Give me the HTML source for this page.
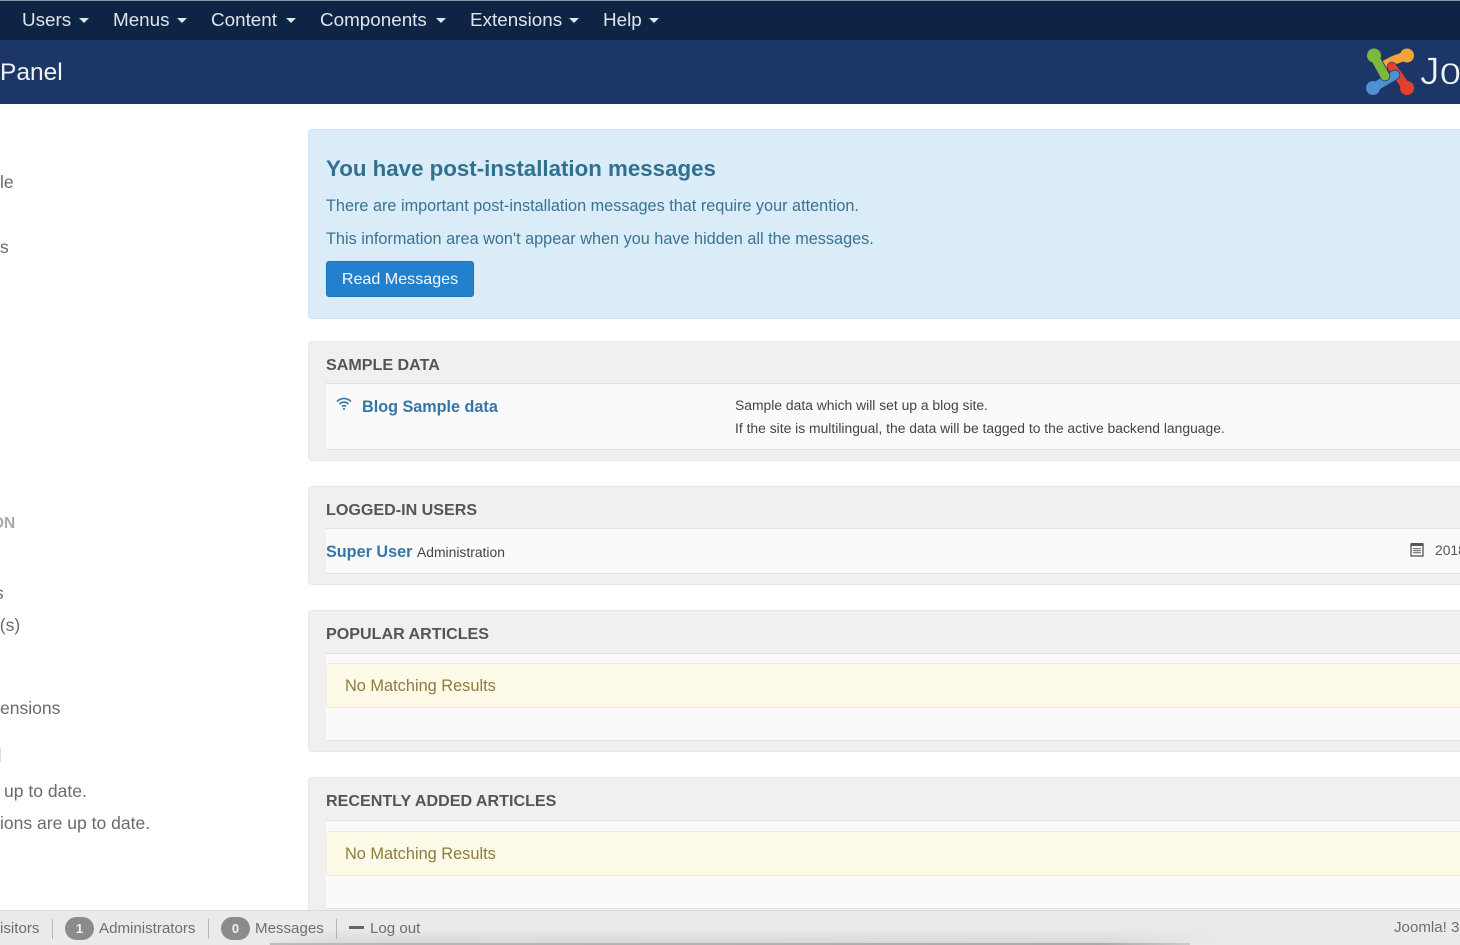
<!DOCTYPE html>
<html><head><meta charset="utf-8"><style>
html,body{margin:0;padding:0;width:1460px;height:945px;overflow:hidden;background:#fff;font-family:"Liberation Sans",sans-serif}
#w{position:absolute;left:0;top:0;width:1460px;height:945px;overflow:hidden;filter:blur(.35px)}
.a{position:absolute;white-space:nowrap}
.nav{color:#dfe5ec;font-size:18.85px;line-height:24px;top:8px}
.car{position:absolute;top:18px;width:0;height:0;border-left:5px solid transparent;border-right:5px solid transparent;border-top:5px solid #dfe5ec}
.side{color:#6a6a6a;font-size:17.55px;line-height:20px}
.well{position:absolute;left:308px;width:1160px;background:#f0f0f0;border:1px solid #e8e8e8;border-radius:4px;box-sizing:border-box}
.row{position:absolute;left:326px;width:1140px;background:#fafafa;border-top:1px solid #e2e2e2;border-bottom:1px solid #e2e2e2;box-sizing:border-box}
.h{color:#555;font-weight:bold;font-size:16.1px;line-height:20px;left:326px}
.warn{position:absolute;left:326px;width:1140px;height:45px;background:#fdfae8;border:1px solid #f3ecd4;border-radius:4px;box-sizing:border-box}
.wt{color:#8f7b3f;font-size:16.35px;line-height:20px;left:345px}
.foot{color:#6f6f6f;font-size:15.1px;line-height:20px;top:919px}
.sep{position:absolute;top:919px;width:1px;height:20px;background:#b5b5b5}
.badge{position:absolute;top:917px;height:23px;border-radius:12px;background:#8b8b8b;color:#f2f2f2;font-size:13px;font-weight:bold;line-height:23px;text-align:center}
</style></head><body><div id="w">
<div class="a" style="left:0;top:0;width:1460px;height:40px;background:#0e2444;border-top:1px solid #8a96a8;box-sizing:border-box"></div>
<div class="a nav" style="left:22px">Users</div><div class="car" style="left:79px"></div>
<div class="a nav" style="left:113px">Menus</div><div class="car" style="left:177px"></div>
<div class="a nav" style="left:211px">Content</div><div class="car" style="left:286px"></div>
<div class="a nav" style="left:320px">Components</div><div class="car" style="left:436px"></div>
<div class="a nav" style="left:470px">Extensions</div><div class="car" style="left:569px"></div>
<div class="a nav" style="left:603px">Help</div><div class="car" style="left:649px"></div>
<div class="a" style="left:0;top:40px;width:1460px;height:64px;background:#1c3767"></div>
<div class="a" style="left:0;top:58px;color:#f0f3f7;font-size:24.5px;line-height:30px">Panel</div>
<svg class="a" style="left:1366px;top:48px" width="48" height="48" viewBox="0 0 48 48" fill="none" stroke-linecap="round">
<path d="M41 8C32 10 24 13 16 19" stroke="#1c3767" stroke-width="10.5"/><path d="M41 8C32 10 24 13 16 19" stroke="#f2a33a" stroke-width="9"/><circle cx="41" cy="7.5" r="7" fill="#f2a33a"/>
<path d="M26 19L41 40" stroke="#1c3767" stroke-width="10.5"/><path d="M26 19L41 40" stroke="#e2402b" stroke-width="9"/><circle cx="41" cy="40" r="7" fill="#e2402b"/>
<path d="M7 40L29 27" stroke="#1c3767" stroke-width="10.5"/><path d="M7 40L29 27" stroke="#4e90d2" stroke-width="9"/><circle cx="7" cy="40" r="7" fill="#4e90d2"/>
<path d="M8 8L19 28" stroke="#1c3767" stroke-width="10.5"/><path d="M8 8L19 28" stroke="#7ab840" stroke-width="9"/><circle cx="8" cy="7.5" r="7" fill="#7ab840"/>
</svg>
<div class="a" style="left:1420px;top:49.5px;color:#f0f3f7;font-size:39px;line-height:44px;-webkit-text-stroke:.7px #1c3767;paint-order:fill stroke">Jo</div>

<div class="a side" style="left:0;top:172px">le</div>
<div class="a side" style="left:0;top:237px">s</div>
<div class="a" style="left:-8px;top:514px;color:#aaa;font-size:15.5px;font-weight:bold;line-height:20px">ON</div>
<div class="a side" style="left:-5px;top:583px">s</div>
<div class="a side" style="left:-10px;top:615px">e(s)</div>
<div class="a side" style="left:0;top:698px">ensions</div>
<div class="a" style="left:0;top:748px;width:1px;height:14px;background:#ddd"></div>
<div class="a side" style="left:4px;top:781px">up to date.</div>
<div class="a side" style="left:0;top:813px">ions are up to date.</div>

<div class="a" style="left:308px;top:129px;width:1160px;height:190px;background:#d9ecf8;border:1px solid #cfe5f2;border-radius:4px;box-sizing:border-box"></div>
<div class="a" style="left:326px;top:154px;color:#31708f;font-size:22.3px;font-weight:bold;line-height:30px">You have post-installation messages</div>
<div class="a" style="left:326px;top:196px;color:#3a7392;font-size:16.25px;line-height:20px">There are important post-installation messages that require your attention.</div>
<div class="a" style="left:326px;top:229px;color:#3a7392;font-size:16.25px;line-height:20px">This information area won't appear when you have hidden all the messages.</div>
<div class="a" style="left:326px;top:261px;width:148px;height:36px;background:#2280cc;border:1px solid #1b73bb;box-sizing:border-box;border-radius:3px;color:#f4f9fd;font-size:16.1px;line-height:34px;text-align:center">Read Messages</div>

<div class="well" style="top:341px;height:120px"></div>
<div class="a h" style="top:355px">SAMPLE DATA</div>
<div class="row" style="top:383px;height:67px"></div>
<svg class="a" style="left:335px;top:396px" width="18" height="16" viewBox="0 0 18 16" fill="none" stroke="#3a7cab" stroke-width="1.7"><path d="M2 5.5C6 1.5 12 1.5 16 5.5"/><path d="M4.5 8C7.2 5.5 10.8 5.5 13.5 8"/><path d="M7 10.5C8.2 9.5 9.8 9.5 11 10.5"/><circle cx="9" cy="13" r="1.1" fill="#3a7cab" stroke="none"/></svg>
<div class="a" style="left:362px;top:397px;color:#3676a6;font-size:16.2px;font-weight:bold;line-height:20px">Blog Sample data</div>
<div class="a" style="left:735px;top:395px;color:#444;font-size:13.88px;line-height:20px">Sample data which will set up a blog site.</div>
<div class="a" style="left:735px;top:418px;color:#444;font-size:13.88px;line-height:20px">If the site is multilingual, the data will be tagged to the active backend language.</div>

<div class="well" style="top:486px;height:99px"></div>
<div class="a h" style="top:500px">LOGGED-IN USERS</div>
<div class="row" style="top:528px;height:46px"></div>
<div class="a" style="left:326px;top:542px;color:#3676a6;font-size:16.2px;font-weight:bold;line-height:20px">Super User</div>
<div class="a" style="left:417px;top:542px;color:#444;font-size:13.88px;line-height:20px">Administration</div>
<svg class="a" style="left:1410px;top:542px" width="14" height="15" viewBox="0 0 14 15"><rect x="1" y="2" width="12" height="12" fill="none" stroke="#555" stroke-width="1.3"/><rect x="1" y="1" width="12" height="3" fill="#555"/><path d="M3 6.5H11M3 8.5H11M3 10.5H11" stroke="#777" stroke-width="1"/><path d="M5 6V12M7 6V12M9 6V12" stroke="#999" stroke-width=".8"/></svg>
<div class="a" style="left:1435px;top:540px;color:#555;font-size:13.88px;line-height:20px">2018</div>

<div class="well" style="top:610px;height:142px"></div>
<div class="a h" style="top:624px">POPULAR ARTICLES</div>
<div class="row" style="top:653px;height:88px"></div>
<div class="warn" style="top:663px"></div>
<div class="a wt" style="top:676px">No Matching Results</div>

<div class="well" style="top:777px;height:140px"></div>
<div class="a h" style="top:791px">RECENTLY ADDED ARTICLES</div>
<div class="row" style="top:820px;height:89px"></div>
<div class="warn" style="top:831px"></div>
<div class="a wt" style="top:844px">No Matching Results</div>

<div class="a" style="left:0;top:910px;width:1460px;height:35px;background:#eaeaea;border-top:1px solid #ddd;box-sizing:border-box"></div>
<div class="a" style="left:260px;top:928px;width:960px;height:15px;background:linear-gradient(180deg,rgba(215,215,215,0),rgba(215,215,215,.9));-webkit-mask-image:linear-gradient(90deg,transparent,#000 8%,#000 88%,transparent)"></div>
<div class="a" style="left:270px;top:943px;width:920px;height:2px;background:linear-gradient(90deg,#bbb,#aaa 90%,#ccc)"></div>
<div class="a foot" style="left:0;top:919px">isitors</div>
<div class="sep" style="left:52px"></div>
<div class="badge" style="left:65px;width:29px">1</div>
<div class="a foot" style="left:99px">Administrators</div>
<div class="sep" style="left:208px"></div>
<div class="badge" style="left:221px;width:29px">0</div>
<div class="a foot" style="left:255px">Messages</div>
<div class="sep" style="left:336px"></div>
<div class="a" style="left:349px;top:926px;width:15px;height:3px;background:#666"></div>
<div class="a foot" style="left:370px">Log out</div>
<div class="a foot" style="left:1394px;top:918px">Joomla! 3</div>
</div></body></html>
